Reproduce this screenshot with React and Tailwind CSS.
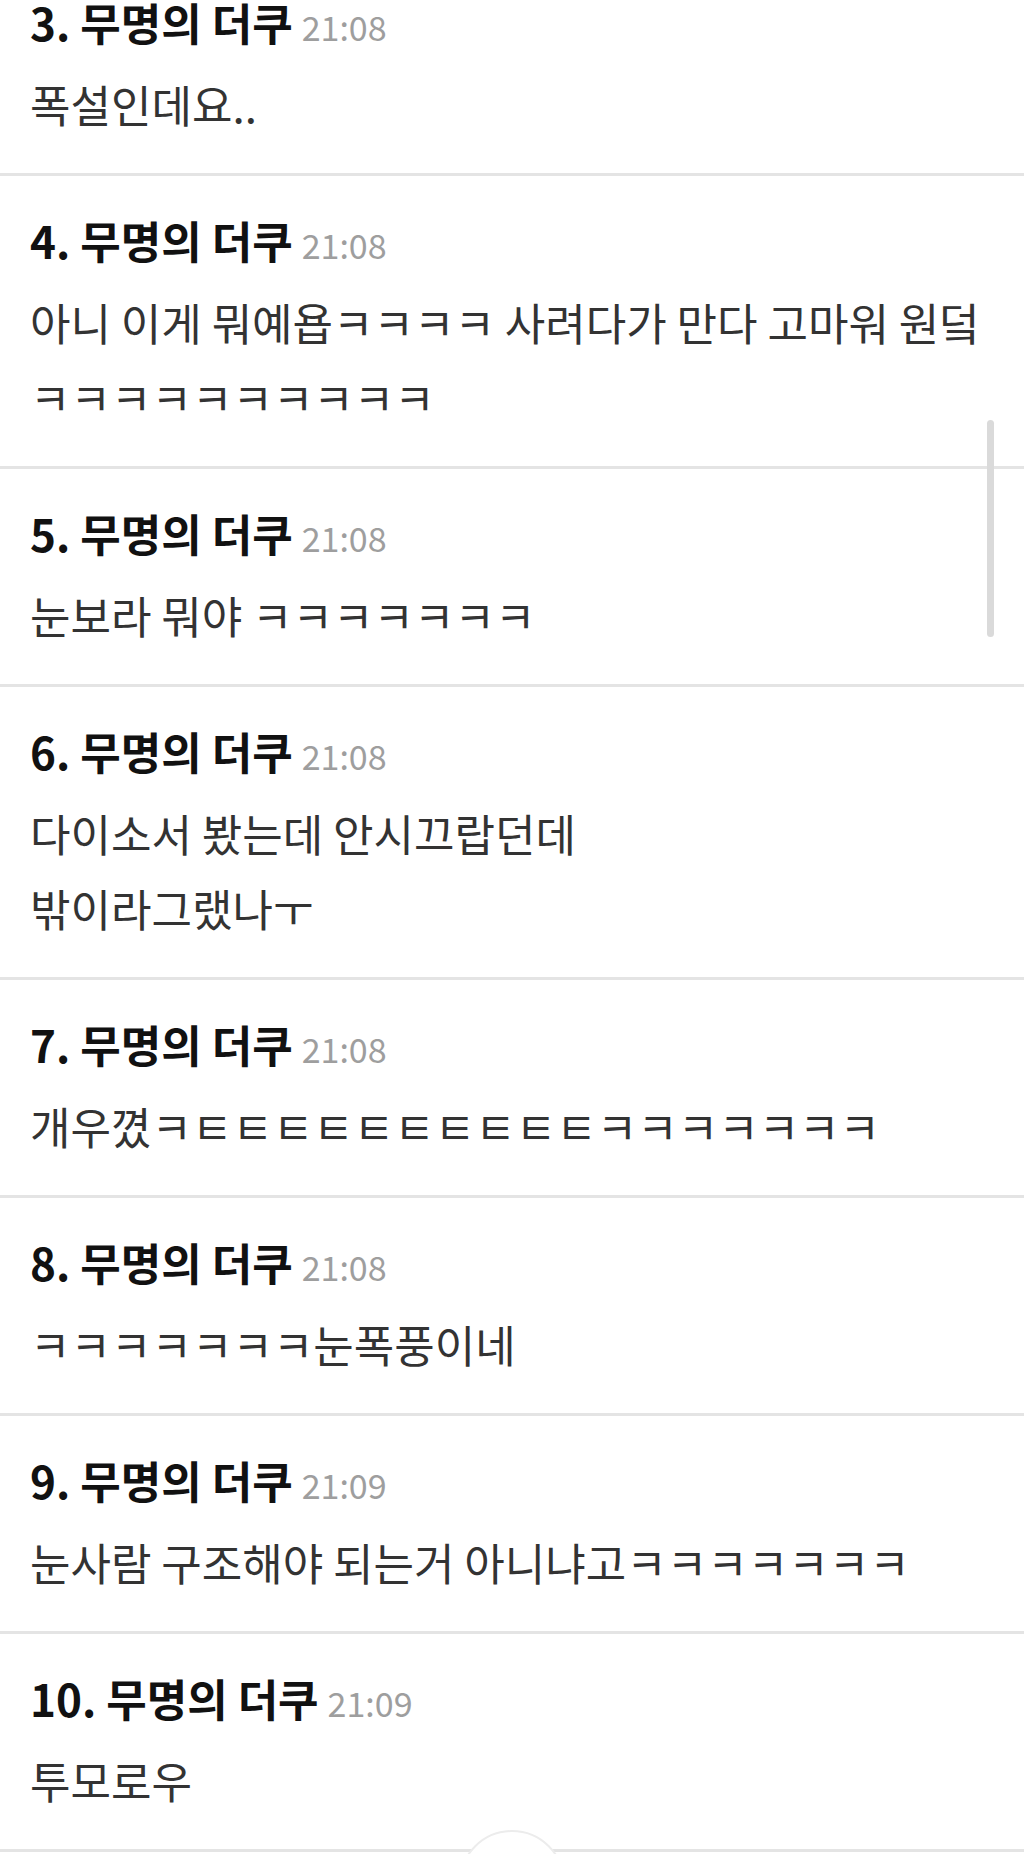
import React from "react";

const comments = [
  { no: 3, time: "21:08", lines: ["폭설인데요.."] },
  { no: 4, time: "21:08", lines: ["아니 이게 뭐예욥ㅋㅋㅋㅋ 사려다가 만다 고마워 원덬", "ㅋㅋㅋㅋㅋㅋㅋㅋㅋㅋ"] },
  { no: 5, time: "21:08", lines: ["눈보라 뭐야 ㅋㅋㅋㅋㅋㅋㅋ"] },
  { no: 6, time: "21:08", lines: ["다이소서 봤는데 안시끄랍던데", "밖이라그랬나ㅜ"] },
  { no: 7, time: "21:08", lines: ["개우꼈ㅋㅌㅌㅌㅌㅌㅌㅌㅌㅌㅌㅋㅋㅋㅋㅋㅋㅋ"] },
  { no: 8, time: "21:08", lines: ["ㅋㅋㅋㅋㅋㅋㅋ눈폭풍이네"] },
  { no: 9, time: "21:09", lines: ["눈사람 구조해야 되는거 아니냐고ㅋㅋㅋㅋㅋㅋㅋ"] },
  { no: 10, time: "21:09", lines: ["투모로우"] },
];

function CommentRow({ item }) {
  return (
    <div className="border-b-[3px] border-[#e4e4e4] px-[30px] pt-[36px] pb-[31px]">
      <div className="flex items-baseline gap-[9px] h-[56px] leading-[56px]">
        <span className="text-[44px] font-bold text-[#111111]">
          {item.no}. 무명의 더쿠
        </span>
        <span className="text-[34px] text-[#9e9e9e]">{item.time}</span>
      </div>
      <div className="mt-[17px] text-[44px] leading-[75px] text-[#333333]">
        {item.lines.map((line, i) => (
          <div key={i} className="whitespace-nowrap">
            {line}
          </div>
        ))}
      </div>
    </div>
  );
}

export default function App() {
  return (
    <div className="relative h-[1854px] w-full overflow-hidden bg-white font-['Noto_Sans_CJK_KR','Noto_Sans',sans-serif]">
      <div className="-mt-[42px]">
        {comments.map((c) => (
          <CommentRow key={c.no} item={c} />
        ))}
      </div>

      {/* scrollbar thumb */}
      <div className="absolute left-[987px] top-[420px] h-[217px] w-[7px] rounded-full bg-[#dadada]" />

      {/* top button peeking at the bottom */}
      <div className="absolute left-[459px] top-[1830px] h-[106px] w-[106px] rounded-full border-2 border-[#ececec] bg-white" />
    </div>
  );
}
